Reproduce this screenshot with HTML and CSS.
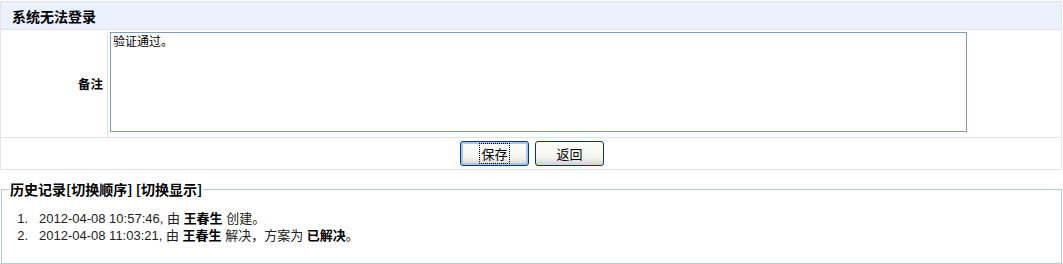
FILE: index.html
```html
<!DOCTYPE html>
<html>
<head>
<meta charset="utf-8">
<link rel="stylesheet" href="styles.css">
</head>
<body>
<table class="form">
  <tr><th colspan="2" class="title">系统无法登录</th></tr>
  <tr>
    <td class="label">备注</td>
    <td class="field"><textarea class="note">验证通过。</textarea></td>
  </tr>
  <tr>
    <td colspan="2" class="actions">
      <div class="btnrow">
        <button class="btn focus"><span class="focusring">保存</span></button>
        <button class="btn">返回</button>
      </div>
    </td>
  </tr>
</table>
<fieldset class="history">
  <legend>历史记录[切换顺序] [切换显示]</legend>
  <ol>
    <li>2012-04-08 10:57:46, 由 <b>王春生</b> 创建。</li>
    <li>2012-04-08 11:03:21, 由 <b>王春生</b> 解决，方案为 <b>已解决</b>。</li>
  </ol>
</fieldset>
</body>
</html>
```
FILE: styles.css
```css
html, body { margin: 0; padding: 0; background: #fff; }
body {
  font-family: "Liberation Sans", Arial, "Noto Sans CJK SC", sans-serif;
  font-size: 12px;
  color: #000;
  padding-top: 1px;
}
.form {
  width: 1062px;
  border-collapse: collapse;
  border: 1px solid #e3e3e3;
}
.form td, .form th { border: 1px solid #e3e3e3; padding: 0; }
.title {
  background: #ebf2fe;
  height: 27px;
  text-align: left;
  padding-left: 11px !important;
  font-size: 14px;
  font-weight: bold;
  font-family: "Noto Sans CJK SC", sans-serif;
}
.label {
  width: 102px;
  text-align: right;
  padding-right: 4px !important;
  font-weight: bold;
  font-size: 12.5px;
  font-family: "Noto Sans CJK SC", sans-serif;
}
.field { height: 105px; padding: 2px 0 0 2px !important; vertical-align: top; }
.note {
  display: block;
  box-sizing: border-box;
  width: 857px;
  height: 100px;
  margin: 0;
  border: 1px solid #7f9db9;
  padding: 1px 2px;
  resize: none;
  font-family: "Noto Sans CJK SC", sans-serif;
  font-size: 12px;
  line-height: 14px;
}
.actions { height: 31px; padding-left: 2px !important; }
.btnrow { display: flex; justify-content: center; gap: 6px; }
.btn {
  box-sizing: border-box;
  width: 69px;
  height: 25px;
  margin: 0;
  padding: 0;
  border: 1px solid #003c74;
  border-radius: 3px;
  background: linear-gradient(#ffffff, #f3f3ef 70%, #d6d0c5);
  font-family: "Noto Sans CJK SC", sans-serif;
  font-size: 13px;
  color: #000;
}
.btn.focus { box-shadow: inset 0 0 0 2px #a8c4f0; }
.focusring { outline: 1px dotted #000; padding: 0 1px; }
.history {
  margin: 9px 1px 0 1px;
  width: 1061px;
  box-sizing: border-box;
  border: 1px solid #b5c7de;
  padding: 0;
  height: 85px;
}
.history legend {
  margin-left: 7px;
  padding: 0 1px;
  font-weight: bold;
  font-size: 14px;
  font-family: "Noto Sans CJK SC", sans-serif;
}
.history ol {
  margin: 11px 0 0 0;
  padding-left: 37px;
  color: #222;
  font-size: 13px;
  line-height: 17px;
}
.history li::marker { content: counter(list-item) ".   "; }
.history li b { font-weight: bold; color: #000; }
```
